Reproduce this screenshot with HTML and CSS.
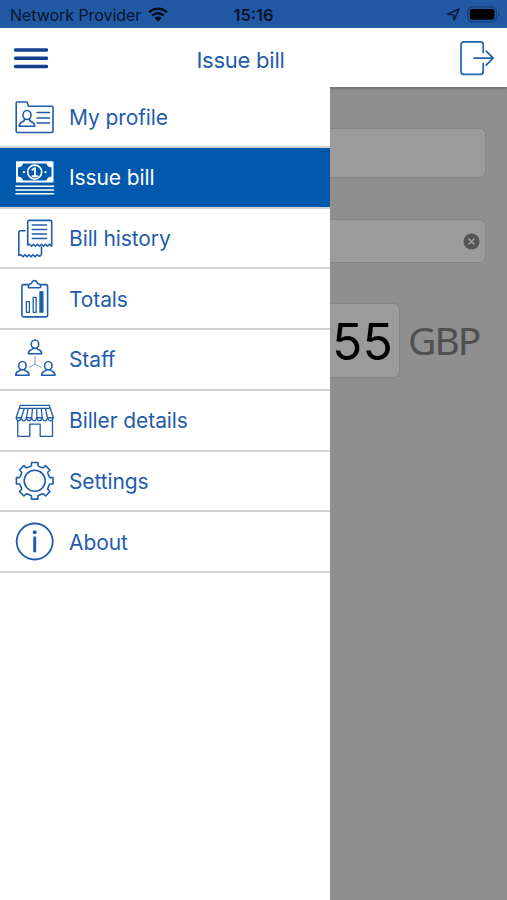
FILE: index.html
```html
<!DOCTYPE html>
<html lang="en">
<head>
  <meta charset="UTF-8" />
  <meta name="viewport" content="width=device-width, initial-scale=1.0"/>
  <title>Issue bill</title>
  <link rel="stylesheet" href="styles.css">
</head>
<body>

  <div class="status-bar">
    <div class="carrier">
      <span>Network Provider</span>
      <svg width="20" height="15" viewBox="0 0 20 15">
        <path d="M1.2 5.4a12.6 12.6 0 0 1 17.6 0M4.2 8.6a8.3 8.3 0 0 1 11.6 0" fill="none" stroke="#040b18" stroke-width="2.5"/>
        <path d="M6.4 10.9a5.1 5.1 0 0 1 7.2 0L10 14.5z" fill="#040b18"/>
      </svg>
    </div>
    <div class="time">15:16</div>
    <div class="indicators">
      <svg width="13" height="13" viewBox="0 0 13 13">
        <path d="M1 6.1L12 1L7.1 12L6.4 6.7z" fill="none" stroke="#0b1c38" stroke-width="1.6" stroke-linejoin="round"/>
      </svg>
      <svg width="33" height="17" viewBox="0 0 33 17">
        <rect x=".8" y=".8" width="28.6" height="15" rx="4.5" fill="none" stroke="#163f78" stroke-width="1.2"/>
        <rect x="2.8" y="2.9" width="24.6" height="10.8" rx="2.2" fill="#000"/>
        <path d="M31 6v4.500q1.500-.8 1.500-2.200T31 6z" fill="#163f78"/>
      </svg>
    </div>
  </div>

  <header>
    <svg class="menu-icon" width="36" height="24" viewBox="0 0 36 24">
      <path d="M3.500 3H34.500M3.500 11.200H34.500M3.500 19.500H34.500"/>
    </svg>
    <h1>Issue bill</h1>
    <svg class="logout-icon" width="36" height="36" viewBox="0 0 36 36">
      <path d="M24.200 11.500V3.500Q24.200 .9 21.200 .9H5Q2 .9 2 3.900V30.400Q2 33.400 5 33.400H21.200Q24.200 33.400 24.200 30.400V22.500M15 17.200H34M27.200 10.200L34.200 17.200L27.200 24.200"/>
    </svg>
  </header>

  <div class="main">
    <nav class="menu">
      <a class="menu-item">
        <svg viewBox="0 0 42 42">
          <path d="M3 6H13L14.500 10.300H38Q39 10.300 39 11.300V35.500Q39 36.500 38 36.500H3.200Q2.200 36.500 2.200 35.500V7Q2.200 6 3 6z"/>
          <path d="M23 16.500H35.500M23 22H35.500M23 27H35.500"/>
          <ellipse cx="13" cy="19" rx="4" ry="4.500"/>
          <path d="M10.500 23Q10.700 25.300 8 26Q5.500 27 5.300 30.300H20.700Q20.500 27 18 26Q15.300 25.300 15.500 23"/>
        </svg>
        <span>My profile</span>
      </a>
      <a class="menu-item active">
        <svg viewBox="0 0 42 42">
          <rect class="solid" x="2" y="4.300" width="37.500" height="21.300" rx=".8"/>
          <path class="note" d="M9 6.500H32.500Q33 10 37.500 10.500V19.500Q33 20 32.500 23.400H9Q8.500 20 4 19.500V10.500Q8.500 10 9 6.500z"/>
          <circle cx="20.700" cy="15.100" r="7"/>
          <circle class="solid" cx="10" cy="15.100" r="1.200"/>
          <circle class="solid" cx="31.500" cy="15.100" r="1.200"/>
          <path d="M18.300 12.700L20.900 11V19M18.500 19.300H23.500" stroke-width="1.900"/>
          <path d="M2 29.300H39.500M2 33H39.500M2 36.700H39.500"/>
        </svg>
        <span>Issue bill</span>
      </a>
      <a class="menu-item">
        <svg viewBox="0 0 42 42">
          <path d="M13.700 27V4Q13.700 2.400 15.300 2.400H36Q37.700 2.400 37.700 4V28L35.500 26.300L33.500 28.300L31.500 26.300L29.500 28.300L27.500 26.300L25.500 28.300L23.500 26.300L21.500 28.300L19.500 26.300L17.500 28.300L15.500 26.300z"/>
          <path d="M18.300 7H32.500M18.300 11.500H32.500M18.300 16H32.500M18.300 20.500H32.500"/>
          <path d="M11 12.700H6.500Q4.800 12.700 4.800 14.400V37.500L7 36.700L9 38.800L11 36.700L13 38.800L15 36.700L17 38.800L19 36.700L21 38.800L23 36.700L25.500 38.300L27.500 36.500V29"/>
        </svg>
        <span>Bill history</span>
      </a>
      <a class="menu-item">
        <svg viewBox="0 0 42 42">
          <path d="M14 6.600H9.500Q7.900 6.600 7.900 8.200V37.300Q7.900 38.900 9.500 38.900H32Q33.600 38.900 33.600 37.300V8.200Q33.600 6.600 32 6.600H27"/>
          <path d="M14.300 9.700Q14.300 6 17.300 5.500Q18.500 2.500 20.500 2.500T23.700 5.500Q26.700 6 26.700 8.500Q26.700 9.700 25.500 9.700z"/>
          <path class="thin" d="M12.400 23.700H15.400V34.300H12.400zM19.200 19.300H22.200V34.300H19.200z"/>
          <rect class="solid" x="25.300" y="13.200" width="4.200" height="21.600"/>
        </svg>
        <span>Totals</span>
      </a>
      <a class="menu-item">
        <svg viewBox="0 0 42 42">
          <defs>
            <g id="person">
              <ellipse cx="0" cy="0" rx="3.700" ry="4.200"/>
              <path d="M-2 3.700Q-2 5-4 5.600Q-6.500 6.500-6.700 9.500H6.700Q6.500 6.500 4 5.600Q2 5 2 3.700"/>
            </g>
          </defs>
          <use href="#person" x="21" y="5.200"/>
          <use href="#person" x="8.400" y="26.700"/>
          <use href="#person" x="34.300" y="26.700"/>
          <path class="faint" d="M21 17.500V25L15.300 28.300M21 25L27 28.300"/>
        </svg>
        <span>Staff</span>
      </a>
      <a class="menu-item">
        <svg viewBox="0 0 42 42">
          <path class="thin" d="M6.300 5.300H35.300L39.300 17.500V18.200Q38.500 20.800 36.700 20.800T33.500 18.200Q32.700 20.800 31 20.800T28.200 18.200Q27.300 20.800 25.600 20.800T22.800 18.200Q21.800 20.800 20.200 20.800T17.600 18.200Q16.700 20.800 15 20.800T12.400 18.200Q11.500 20.800 9.800 20.800T7.200 18.200Q6.300 20.800 4.600 20.800T2.200 18.200V17.500z"/>
          <path class="thin" d="M5.500 8.300H36.200M7.200 18.200L10.300 8.500M12.400 18.200L14 8.500M17.600 18.200L18.500 8.500M22.800 18.200V8.500M28.200 18.200L27.300 8.500M33.500 18.200L31.500 8.500"/>
          <path d="M3 17.700H7M12.600 17.700H17.500M23 17.700H28M33.700 17.700H38.800"/>
          <path class="thin" d="M3.700 21V36.300H15.800V24.200H26.200V36.300H38.500V21"/>
        </svg>
        <span>Biller details</span>
      </a>
      <a class="menu-item">
        <svg viewBox="0 0 42 42">
          <g transform="translate(20.700 20.800)">
            <circle r="10.500"/>
            <path d="M-4.400-14.400L-3.200-15.200V-18.300H3.200V-15.200L4.400-14.400L7.100-13.300L8.500-13L10.800-15.200L15.200-10.800L13-8.500L13.300-7.100L14.400-4.400L15.200-3.200H18.300V3.200H15.200L14.400 4.400L13.300 7.100L13 8.500L15.200 10.800L10.800 15.200L8.500 13L7.100 13.300L4.400 14.400L3.200 15.200V18.300H-3.200V15.200L-4.400 14.400L-7.100 13.300L-8.500 13L-10.800 15.200L-15.200 10.800L-13 8.500L-13.300 7.100L-14.400 4.400L-15.200 3.200H-18.300V-3.200H-15.200L-14.400-4.400L-13.300-7.100L-13-8.500L-15.200-10.800L-10.800-15.200L-8.500-13L-7.100-13.300z"/>
          </g>
        </svg>
        <span>Settings</span>
      </a>
      <a class="menu-item">
        <svg viewBox="0 0 42 42">
          <circle cx="20.700" cy="20.500" r="18" stroke-width="1.800"/>
          <circle class="solid" cx="20.700" cy="11.300" r="2"/>
          <path d="M20.700 16.800V30" stroke-width="3"/>
        </svg>
        <span>About</span>
      </a>
    </nav>

    <!-- bill form, dimmed while the menu is open -->
    <div class="content">
      <div class="field"></div>
      <div class="field small">
        <svg width="17" height="17" viewBox="0 0 17 17">
          <circle cx="8.500" cy="8.500" r="8" fill="#545454"/>
          <path d="M5.500 5.500L11.500 11.500M11.500 5.500L5.500 11.500" stroke="#a0a0a0" stroke-width="1.500"/>
        </svg>
      </div>
      <div class="amount-row">
        <div class="amount">55</div>
        <div class="currency">GBP</div>
      </div>
    </div>
  </div>

</body>
</html>
```

FILE: styles.css
```css
:root {
  --blue: #1f5dab;
  --active-bg: #0059ad;
  --status-bg: #2159a4;
  --line: #d3d3d5;
  --dim: #8f8f8f;
  --dim-field: #9b9b9b;
}

* {
  box-sizing: border-box;
}

body {
  margin: 0;
  height: 900px;
  overflow: hidden;
  display: flex;
  flex-direction: column;
  font-family: Inter, "Liberation Sans", sans-serif;
  background-color: white;
  color: var(--blue);
}

.status-bar {
  height: 28px;
  display: grid;
  grid-template-columns: 1fr auto 1fr;
  align-items: center;
  padding: 1px 7px 0 10px;
  background-color: var(--status-bg);
  color: #07142b;
  font-size: 16px;
}

.carrier, .indicators {
  display: flex;
  align-items: center;
  gap: 7px;
}

.carrier {
  letter-spacing: -0.05px;
}

.indicators {
  justify-content: flex-end;
}

.time {
  margin-right: 3px;
  font-weight: 600;
  font-size: 16.5px;
}

header {
  height: 59px;
  display: grid;
  grid-template-columns: 36px 1fr 36px;
  align-items: center;
  padding: 3px 12px 0 12px;
}

h1 {
  margin: 1px 26px 0 0;
  text-align: center;
  font-size: 22px;
  font-weight: 400;
  letter-spacing: -0.25px;
}

header svg {
  fill: none;
  stroke-linecap: round;
  stroke-linejoin: round;
}

.menu-icon {
  stroke: #123f92;
  stroke-width: 3.4;
}

.logout-icon {
  stroke: #2462ae;
  stroke-width: 1.7;
}

.main {
  flex: 1;
  display: flex;
}

.menu {
  width: 330px;
  padding-top: 0.4px;
  background-color: white;
}

.menu-item {
  height: 60.7px;
  display: flex;
  align-items: center;
  gap: 13px;
  padding: 1px 0 0 14px;
  border-bottom: 2px solid var(--line);
  font-size: 21px;
  letter-spacing: -0.1px;
}

.menu-item svg {
  width: 42px;
  height: 42px;
  overflow: visible;
  fill: none;
  stroke: var(--blue);
  stroke-width: 1.6;
  stroke-linecap: round;
  stroke-linejoin: round;
}

.menu-item .thin {
  stroke-width: 1.3;
}

.menu-item .faint {
  stroke-width: 1;
  opacity: 0.6;
}

.menu-item .solid {
  fill: var(--blue);
  stroke: none;
}

.menu-item.active {
  background-color: var(--active-bg);
  color: white;
}

.active svg {
  stroke: white;
}

.menu-item.active .solid {
  fill: white;
}

.active .note {
  fill: var(--active-bg);
  stroke: none;
}

.content {
  flex: 1;
  padding: 41px 21px 0 0;
  background-color: var(--dim);
  box-shadow: inset 0 3px 2px -1px #777;
}

.field {
  height: 50px;
  border: 1px solid #858585;
  border-left: none;
  border-radius: 0 6px 6px 0;
  background-color: var(--dim-field);
}

.field.small {
  height: 44px;
  margin-top: 41px;
  display: flex;
  align-items: center;
  justify-content: flex-end;
  padding-right: 5px;
}

.amount-row {
  display: flex;
  align-items: center;
  gap: 8px;
  margin-top: 40px;
}

.amount {
  width: 70px;
  height: 75px;
  flex-shrink: 0;
  padding-left: 2px;
  border: 1px solid #858585;
  border-left: none;
  border-radius: 0 6px 6px 0;
  background-color: var(--dim-field);
  color: black;
  font-size: 50px;
  line-height: 76px;
}

.currency {
  margin-top: -2px;
  font-family: "Noto Sans", "Open Sans", sans-serif;
  font-size: 39px;
  letter-spacing: -2px;
  color: #505050;
}
```
